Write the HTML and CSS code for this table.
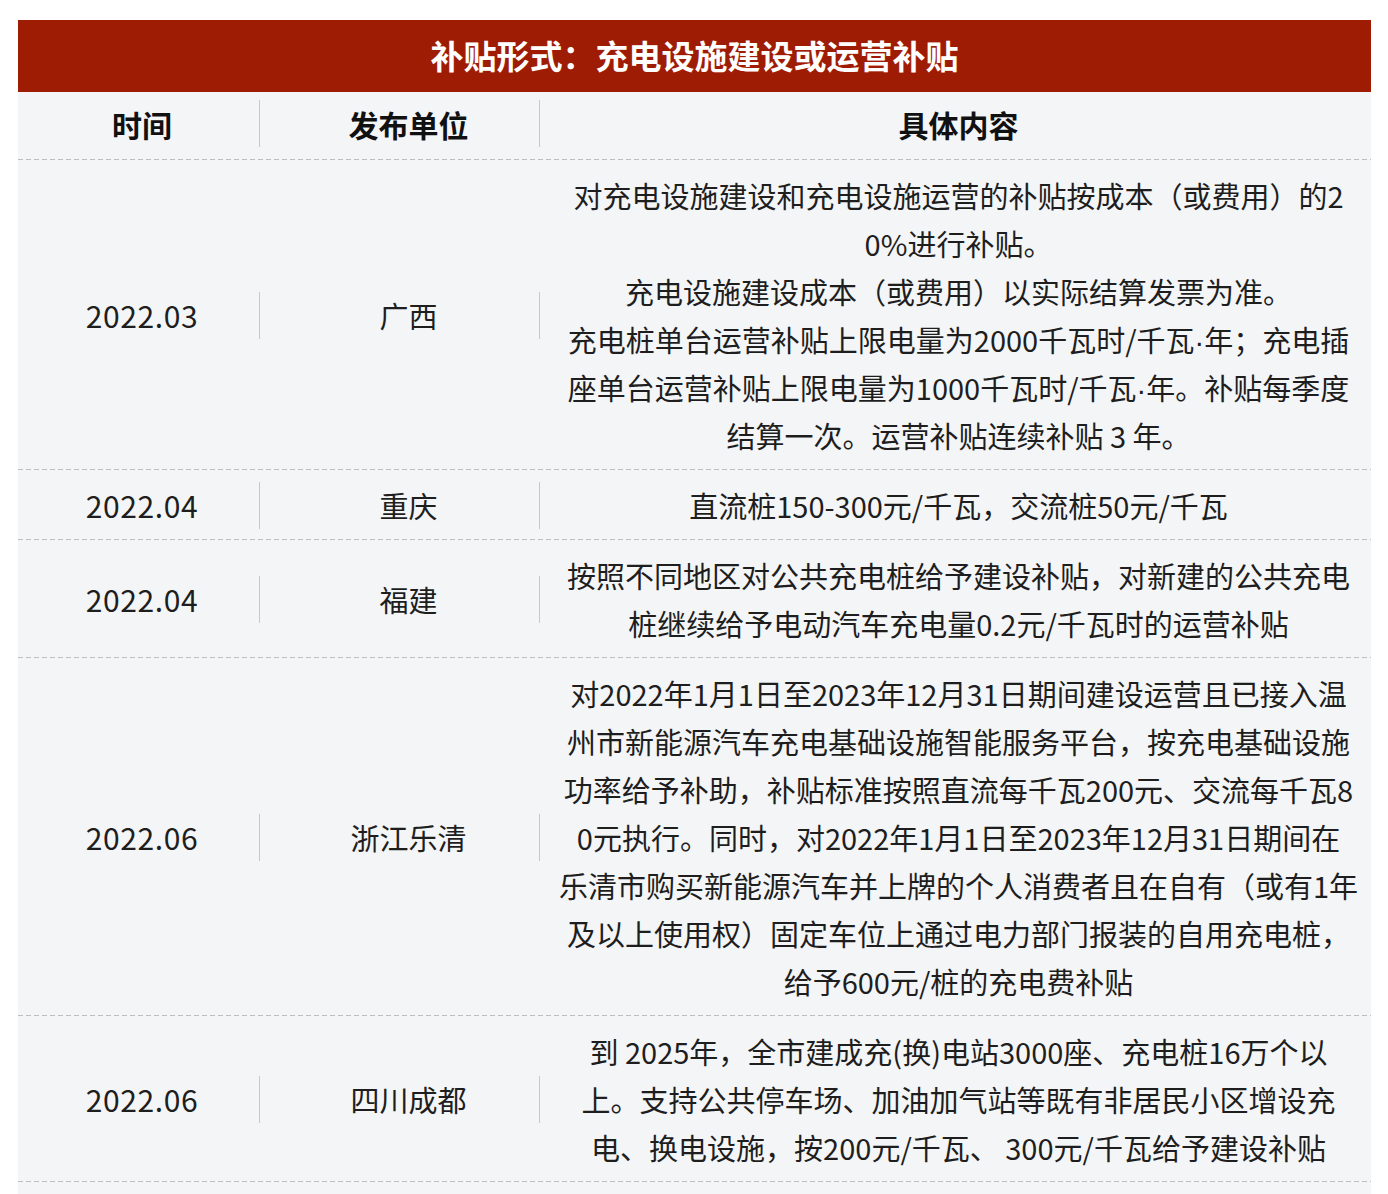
FILE: index.html
```html
<!DOCTYPE html>
<html lang="zh-CN">
<head>
<meta charset="utf-8">
<title>补贴形式</title>
<link rel="stylesheet" href="styles.css">
</head>
<body>
<div class="card">
  <div class="title">补贴形式：充电设施建设或运营补贴</div>
  <div class="row head">
    <div class="c c1">时间</div><div class="sep"></div>
    <div class="c c2">发布单位</div><div class="sep"></div>
    <div class="c c3">具体内容</div>
  </div>
  <div class="row">
    <div class="c c1 date">2022.03</div><div class="sep"></div>
    <div class="c c2">广西</div><div class="sep"></div>
    <div class="c c3">
      <span class="ln">对充电设施建设和充电设施运营的补贴按成本（或费用）的2</span>
      <span class="ln">0%进行补贴。</span>
      <span class="ln">充电设施建设成本（或费用）以实际结算发票为准。</span>
      <span class="ln">充电桩单台运营补贴上限电量为2000千瓦时/千瓦<span class="dot">·</span>年；充电插</span>
      <span class="ln">座单台运营补贴上限电量为1000千瓦时/千瓦<span class="dot">·</span>年。补贴每季度</span>
      <span class="ln">结算一次。运营补贴连续补贴 3 年。</span>
    </div>
  </div>
  <div class="row">
    <div class="c c1 date">2022.04</div><div class="sep"></div>
    <div class="c c2">重庆</div><div class="sep"></div>
    <div class="c c3">
      <span class="ln">直流桩150-300元/千瓦，交流桩50元/千瓦</span>
    </div>
  </div>
  <div class="row">
    <div class="c c1 date">2022.04</div><div class="sep"></div>
    <div class="c c2">福建</div><div class="sep"></div>
    <div class="c c3">
      <span class="ln">按照不同地区对公共充电桩给予建设补贴，对新建的公共充电</span>
      <span class="ln">桩继续给予电动汽车充电量0.2元/千瓦时的运营补贴</span>
    </div>
  </div>
  <div class="row">
    <div class="c c1 date">2022.06</div><div class="sep"></div>
    <div class="c c2">浙江乐清</div><div class="sep"></div>
    <div class="c c3">
      <span class="ln">对2022年1月1日至2023年12月31日期间建设运营且已接入温</span>
      <span class="ln">州市新能源汽车充电基础设施智能服务平台，按充电基础设施</span>
      <span class="ln">功率给予补助，补贴标准按照直流每千瓦200元、交流每千瓦8</span>
      <span class="ln">0元执行。同时，对2022年1月1日至2023年12月31日期间在</span>
      <span class="ln">乐清市购买新能源汽车并上牌的个人消费者且在自有（或有1年</span>
      <span class="ln">及以上使用权）固定车位上通过电力部门报装的自用充电桩，</span>
      <span class="ln">给予600元/桩的充电费补贴</span>
    </div>
  </div>
  <div class="row">
    <div class="c c1 date">2022.06</div><div class="sep"></div>
    <div class="c c2">四川成都</div><div class="sep"></div>
    <div class="c c3">
      <span class="ln">到 2025年，全市建成充(换)电站3000座、充电桩16万个以</span>
      <span class="ln">上。支持公共停车场、加油加气站等既有非居民小区增设充</span>
      <span class="ln">电、换电设施，按200元/千瓦、 300元/千瓦给予建设补贴</span>
    </div>
  </div>
</div>
</body>
</html>
```

FILE: styles.css
```css
html, body {
  margin: 0;
  padding: 0;
  background: #ffffff;
}
body {
  font-family: "Noto Sans CJK SC", "Noto Sans", sans-serif;
  color: #1e1e1e;
  padding-top: 20px;
}
.card {
  margin-left: 18px;
  width: 1353px;
  background: #f4f5f7;
  padding-bottom: 20px;
}
.title {
  height: 72px;
  line-height: 70px;
  background: #9f1c04;
  color: #ffffff;
  font-size: 33px;
  font-weight: 700;
  text-align: center;
}
.row {
  display: grid;
  grid-template-columns: 241px 1px 279px 1px 1fr;
  align-items: center;
  padding: 11px 0 11px;
  background-image: linear-gradient(to right, #bfbfbf 5px, transparent 5px);
  background-size: 8px 1px;
  background-repeat: repeat-x;
  background-position: left bottom;
}
.row.head {
  height: 68px;
  padding: 0 0 5px;
  box-sizing: border-box;
}
.head .c {
  font-size: 30px;
  font-weight: 700;
  color: #111111;
}
.c {
  font-size: 29px;
  text-align: center;
  line-height: 48px;
}
.date {
  font-size: 30px;
  letter-spacing: 0.6px;
}
.c1 { padding-left: 7px; }
.c2 { padding-left: 18px; }
.c3 { padding-left: 6px; }
.ln {
  display: block;
  white-space: nowrap;
  height: 48px;
}
.dot {
  font-family: "Liberation Sans", sans-serif;
  line-height: 1;
}
.sep {
  width: 1px;
  height: 47px;
  background: #c8c8c8;
}
```
